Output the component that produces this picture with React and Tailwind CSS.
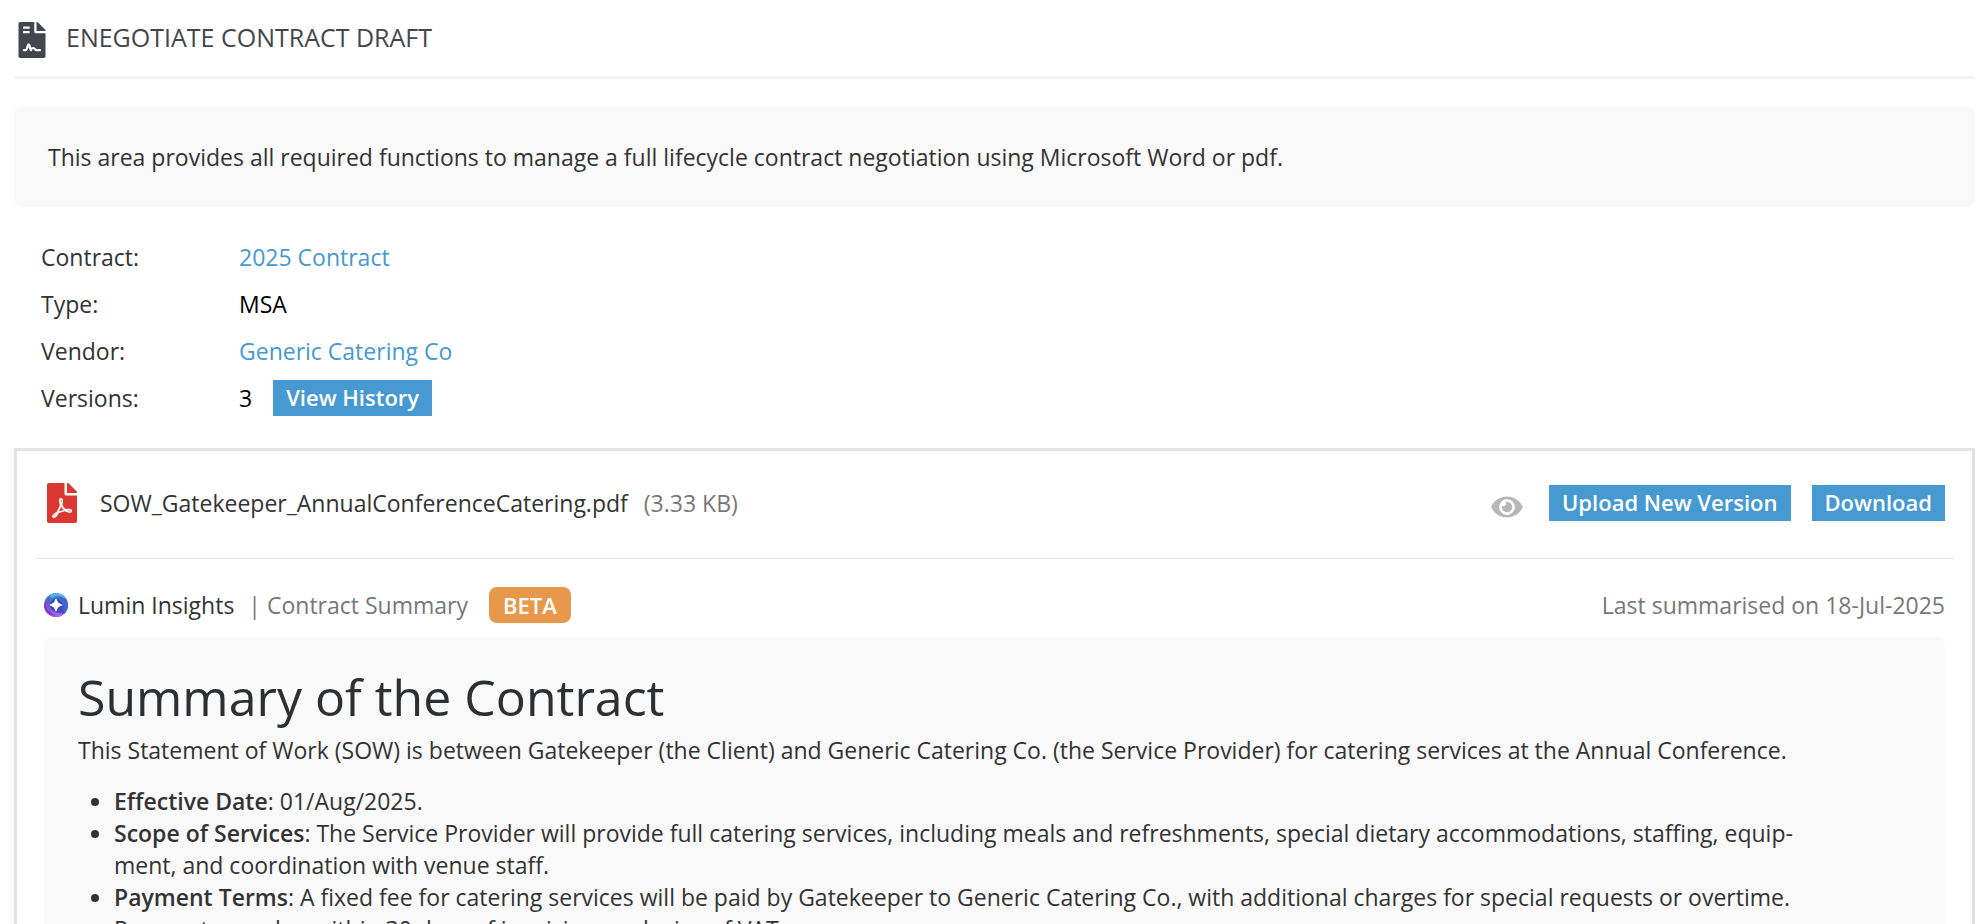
import { FaEye, FaFileContract, FaFilePdf } from "react-icons/fa";

const summaryItems = [
  { title: "Effective Date", text: "01/Aug/2025." },
  {
    title: "Scope of Services",
    text: "The Service Provider will provide full catering services, including meals and refreshments, special dietary accommodations, staffing, equip\u00ADment, and coordination with venue staff.",
  },
  {
    title: "Payment Terms",
    text: "A fixed fee for catering services will be paid by Gatekeeper to Generic Catering Co., with additional charges for special requests or overtime. Payments are due within 30 days of invoicing, exclusive of VAT.",
  },
];

function Button({ children }) {
  return (
    <button type="button" className="h-9 px-[13px] pb-[2px] bg-[#4699d1] text-white text-[22px] leading-8 font-semibold whitespace-nowrap">
      {children}
    </button>
  );
}

function LuminLogo() {
  return (
    <svg className="w-6 h-6 shrink-0" viewBox="0 0 24 24" aria-hidden="true">
      <defs>
        <linearGradient id="ring" x1="0.3" y1="0" x2="0.7" y2="1">
          <stop offset="0" stopColor="#3d8fcb" />
          <stop offset="0.5" stopColor="#4258cc" />
          <stop offset="1" stopColor="#5a3fc4" />
        </linearGradient>
        <linearGradient id="sweep" x1="0" y1="0" x2="1" y2="1">
          <stop offset="0" stopColor="#6b45cf" />
          <stop offset="1" stopColor="#b070f2" />
        </linearGradient>
      </defs>
      <circle cx="12" cy="12" r="12" fill="url(#ring)" />
      <path d="M5 2.3 A12 12 0 0 1 23.8 10 A10 9 0 0 0 8 5Z" fill="#55b4e0" />
      <path d="M23.8 10 A12 12 0 0 1 20 21 Q22 12 14 5 Q20 5 23.8 10Z" fill="#3f66d6" />
      <path d="M6 4 Q3 12 8 17 Q13 21 20.5 20.5 A12 12 0 0 1 0.3 14 Q0.5 8 6 4Z" fill="url(#sweep)" />
      <path d="M1 9 Q1.5 19 12 22.5 Q2 22.5 0.2 14Z" fill="#8438c8" />
      <circle cx="12" cy="12" r="6" fill="#3f3cb0" opacity="0.6" />
      <path d="M12 6 Q13 11 18 12 Q13 13 12 18 Q11 13 6 12 Q11 11 12 6Z" fill="#fff" stroke="#fff" strokeWidth="1.2" />
    </svg>
  );
}

function Details() {
  return (
    <dl className="mt-[26px] ml-[27px] grid grid-cols-[198px_1fr] auto-rows-[47px] items-center">
      <dt>Contract:</dt>
      <dd><a href="#contract" className="text-[#4699d1]">2025 Contract</a></dd>
      <dt>Type:</dt>
      <dd className="text-black">MSA</dd>
      <dt>Vendor:</dt>
      <dd><a href="#vendor" className="text-[#4699d1]">Generic Catering Co</a></dd>
      <dt>Versions:</dt>
      <dd className="flex items-center gap-[21px] text-black">
        3
        <Button>View History</Button>
      </dd>
    </dl>
  );
}

function App() {
  return (
    <main className="h-screen overflow-hidden bg-white pl-[14px] pr-[9px] font-['Open_Sans',sans-serif] text-[23px] leading-8 text-[#333]">
      <header className="h-[79px] pl-1 flex items-center gap-5 border-b-3 border-[#f3f4f5] text-[#44464f]">
        <FaFileContract className="w-7 h-9 mt-1 shrink-0" />
        <h1 className="pb-[2px] text-[25px]">ENEGOTIATE CONTRACT DRAFT</h1>
      </header>

      <p className="mt-[27px] px-[34px] pt-[35px] pb-[34px] rounded-lg bg-[#f9f9f9]">
        This area provides all required functions to manage a full lifecycle contract negotiation using Microsoft Word or pdf.
      </p>

      <Details />

      <section className="mt-[27px] border-3 border-[#e3e3e3] px-[18px]">
        <div className="h-[108px] pl-3 pr-[9px] pb-[3px] flex items-center border-b border-[#e3e3e3]">
          <FaFilePdf className="w-[30px] h-10 mr-[23px] shrink-0 text-[#dc3832]" />
          <span>SOW_Gatekeeper_AnnualConferenceCatering.pdf</span>
          <span className="ml-4 text-[#777]">(3.33 KB)</span>
          <div className="ml-auto flex items-center">
            <button type="button" aria-label="Preview" className="mr-[26px] mt-2 text-[#b7b7b7]">
              <FaEye className="w-8 h-7" />
            </button>
            <div className="flex gap-[21px]">
              <Button>Upload New Version</Button>
              <Button>Download</Button>
            </div>
          </div>
        </div>

        <div className="h-[78px] pt-[14px] px-[9px] flex items-center">
          <LuminLogo />
          <span className="ml-[10px]">Lumin Insights</span>
          <span className="ml-[14px] text-[#777]">| Contract Summary</span>
          <span className="ml-[21px] h-9 px-[14px] rounded-lg bg-[#e7984b] text-white text-[22px] leading-9 font-semibold">BETA</span>
          <span className="ml-auto text-[#777]">Last summarised on 18-Jul-2025</span>
        </div>

        <article className="mx-[9px] px-[34px] pt-7 pb-8 rounded-lg bg-[#f9f9f9]">
          <h2 className="mb-[5px] text-[50px] leading-[64px] text-[#2d2f30]">Summary of the Contract</h2>
          <p>
            This Statement of Work (SOW) is between Gatekeeper (the Client) and Generic Catering Co. (the Service Provider) for catering services at the Annual Conference.
          </p>
          <ul className="mt-[19px] pl-9 pr-[107px] list-disc">
            {summaryItems.map((item) => (
              <li key={item.title}>
                <strong className="font-semibold">{item.title}</strong>: {item.text}
              </li>
            ))}
          </ul>
        </article>
      </section>
    </main>
  );
}

export default App;
